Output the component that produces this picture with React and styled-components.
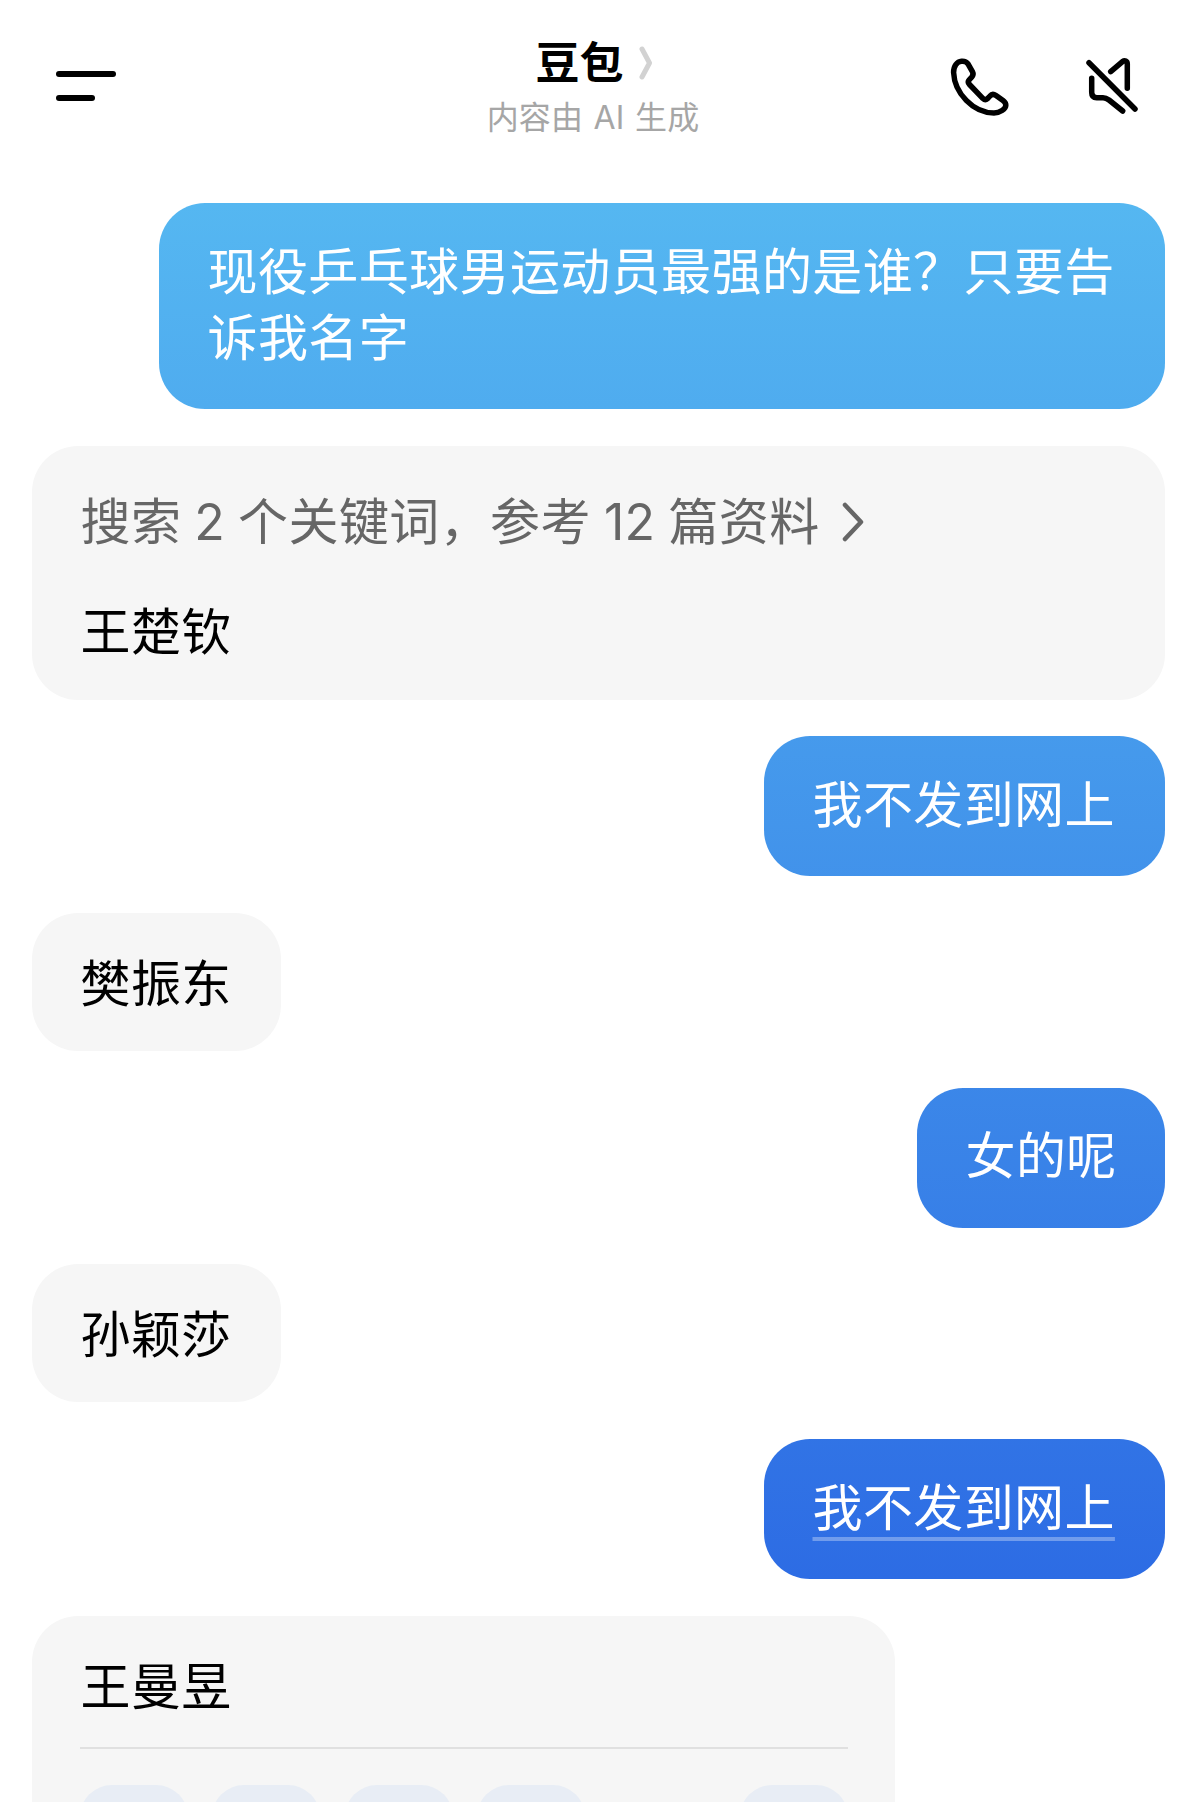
import React from 'react';
import styled, { createGlobalStyle } from 'styled-components';

const GlobalStyle = createGlobalStyle`
    html, body {
        margin: 0;
        padding: 0;
        background: #fff;
    }
    body {
        font-family: "Inter", "Noto Sans CJK SC", sans-serif;
    }
`;

const Page = styled.div`
    width: 1202px;
    height: 1802px;
    overflow: hidden;
    background: #fff;
    display: flex;
    flex-direction: column;
`;

const Header = styled.header`
    height: 203px;
    flex: none;
    display: flex;
    align-items: flex-start;
    padding-left: 56px;
    box-sizing: border-box;
`;

const MenuButton = styled.div`
    width: 60px;
    margin-top: 71px;
    display: flex;
    flex-direction: column;
    gap: 18px;
`;

const MenuLine = styled.span`
    display: block;
    height: 6px;
    border-radius: 3px;
    background: #000;
    width: ${(p) => p.$width}px;
`;

const TitleBlock = styled.div`
    margin-left: 371px;
    width: 212px;
    padding-top: 33.5px;
    display: flex;
    flex-direction: column;
    align-items: center;
`;

const TitleRow = styled.div`
    height: 58px;
    display: flex;
    align-items: center;
    gap: 15px;
    margin-left: 2px;
`;

const Title = styled.h1`
    margin: 0;
    font-size: 44px;
    line-height: 58px;
    font-weight: 600;
    color: #000;
`;

const Subtitle = styled.div`
    font-size: 32px;
    line-height: 56px;
    white-space: nowrap;
    word-spacing: 1.5px;
    letter-spacing: 0.1px;
    color: #a6a6a6;
    margin-top: -1.5px;
`;

const Actions = styled.div`
    margin-left: 250px;
    margin-top: 55px;
    display: flex;
    gap: 72px;
`;

const Thread = styled.main`
    display: flex;
    flex-direction: column;
    gap: 36.7px;
    padding: 0 37px 0 32px;
`;

const Bubble = styled.div`
    box-sizing: border-box;
    flex: none;
    font-size: 50px;
    line-height: 66px;
    letter-spacing: 0.4px;
    border-radius: 46px;
`;

const UserBubble = styled(Bubble)`
    align-self: flex-end;
    padding: 35.5px 49px 38.5px 48.5px;
    width: ${(p) => (p.$width ? `${p.$width}px` : 'auto')};
    white-space: ${(p) => (p.$wrap ? 'normal' : 'nowrap')};
    color: #fff;
    background: linear-gradient(180deg, #55b7f1 203px, #2d6ce4 1579px) fixed;
`;

const BotBubble = styled(Bubble)`
    align-self: flex-start;
    padding: 38px 49px 34px 48.5px;
    width: ${(p) => (p.$width ? `${p.$width}px` : 'auto')};
    color: #000;
    background: #f6f6f6;
`;

const SearchBubble = styled(BotBubble)`
    width: 1133px;
    padding: 43.5px 49px 34.5px 48.5px;
    display: flex;
    flex-direction: column;
    gap: 44px;
`;

const SearchRow = styled.div`
    display: flex;
    align-items: center;
    gap: 22px;
    color: #666;
    word-spacing: -1.5px;
`;

const Underlined = styled.span`
    text-decoration: underline;
    text-decoration-color: rgba(255, 255, 255, 0.32);
    text-decoration-thickness: 4px;
    text-underline-offset: 11px;
`;

const Divider = styled.div`
    height: 2px;
    background: #e0e0e0;
    margin: 27px 0 36px -1px;
    width: 768px;
`;

const Pills = styled.div`
    display: flex;
    gap: 24.5px;
    width: 768px;
    margin-left: -1px;
`;

const Pill = styled.div`
    width: 108px;
    height: 100px;
    flex: none;
    border-radius: 32px;
    background: #e8edf5;
    margin-left: ${(p) => (p.$push ? 'auto' : '0')};
`;

const PhoneIcon = () => (
    <svg width="62" height="62" viewBox="0 0 62 62" fill="none" stroke="#000" strokeWidth="5.5" strokeLinecap="round" strokeLinejoin="round">
        <path d="M12.5 6.2C8 6.5 4.5 11 4.6 17.5C5.5 38 24 58 45 58C51 58 56.5 54 56.8 50.5C57 48.5 56 47 54 45.5L47 40.5C44.5 38.8 42.5 39.2 41 41L38.5 43.7C37 45 35.3 44.8 34 43.6L20.5 29.5C19 28 19 26.2 20.2 24.8L22.7 22.2C24.3 20.4 24.4 18.6 23.4 16.6L19 8.8C17.6 6.8 15.2 6 12.5 6.2Z" />
    </svg>
);

const MuteIcon = () => (
    <svg width="60" height="60" viewBox="0 0 60 60" fill="none" stroke="#000" strokeWidth="5.5" strokeLinecap="round" strokeLinejoin="round">
        <path d="M6 7.7L52 54" />
        <path d="M27.7 16.7L39.5 6.6C41.8 5 44.3 6 44.3 9V33.3" />
        <path d="M8.7 23.3V37.5C8.7 41 10.5 42.7 13.7 42.7H20C22.5 42.7 24 43.5 26 45L39.7 56" />
    </svg>
);

const TitleChevron = () => (
    <svg width="14" height="34" viewBox="0 0 14 34" fill="none" stroke="#d2d2d2" strokeWidth="5" strokeLinecap="round" strokeLinejoin="round">
        <path d="M3 3L10.5 17L3 31" />
    </svg>
);

const RowChevron = () => (
    <svg width="22" height="40" viewBox="0 0 22 40" fill="none" stroke="#666" strokeWidth="4.5" strokeLinecap="round" strokeLinejoin="round">
        <path d="M3 3L19 20L3 37" />
    </svg>
);

export default function App() {
    return (
        <Page>
            <GlobalStyle />
            <Header>
                <MenuButton>
                    <MenuLine $width={60} />
                    <MenuLine $width={39} />
                </MenuButton>
                <TitleBlock>
                    <TitleRow>
                        <Title>豆包</Title>
                        <TitleChevron />
                    </TitleRow>
                    <Subtitle>内容由 AI 生成</Subtitle>
                </TitleBlock>
                <Actions>
                    <PhoneIcon />
                    <MuteIcon />
                </Actions>
            </Header>
            <Thread>
                <UserBubble $width={1006} $wrap>现役乒乓球男运动员最强的是谁&#xFF1F;只要告诉我名字</UserBubble>
                <SearchBubble>
                    <SearchRow>
                        <span>搜索 2 个关键词&#xFF0C;参考 12 篇资料</span>
                        <RowChevron />
                    </SearchRow>
                    <div>王楚钦</div>
                </SearchBubble>
                <UserBubble $width={401}>我不发到网上</UserBubble>
                <BotBubble>樊振东</BotBubble>
                <UserBubble $width={248}>女的呢</UserBubble>
                <BotBubble>孙颖莎</BotBubble>
                <UserBubble $width={401}><Underlined>我不发到网上</Underlined></UserBubble>
                <BotBubble $width={863}>
                    <div>王曼昱</div>
                    <Divider />
                    <Pills>
                        <Pill />
                        <Pill />
                        <Pill />
                        <Pill />
                        <Pill $push />
                    </Pills>
                </BotBubble>
            </Thread>
        </Page>
    );
}
